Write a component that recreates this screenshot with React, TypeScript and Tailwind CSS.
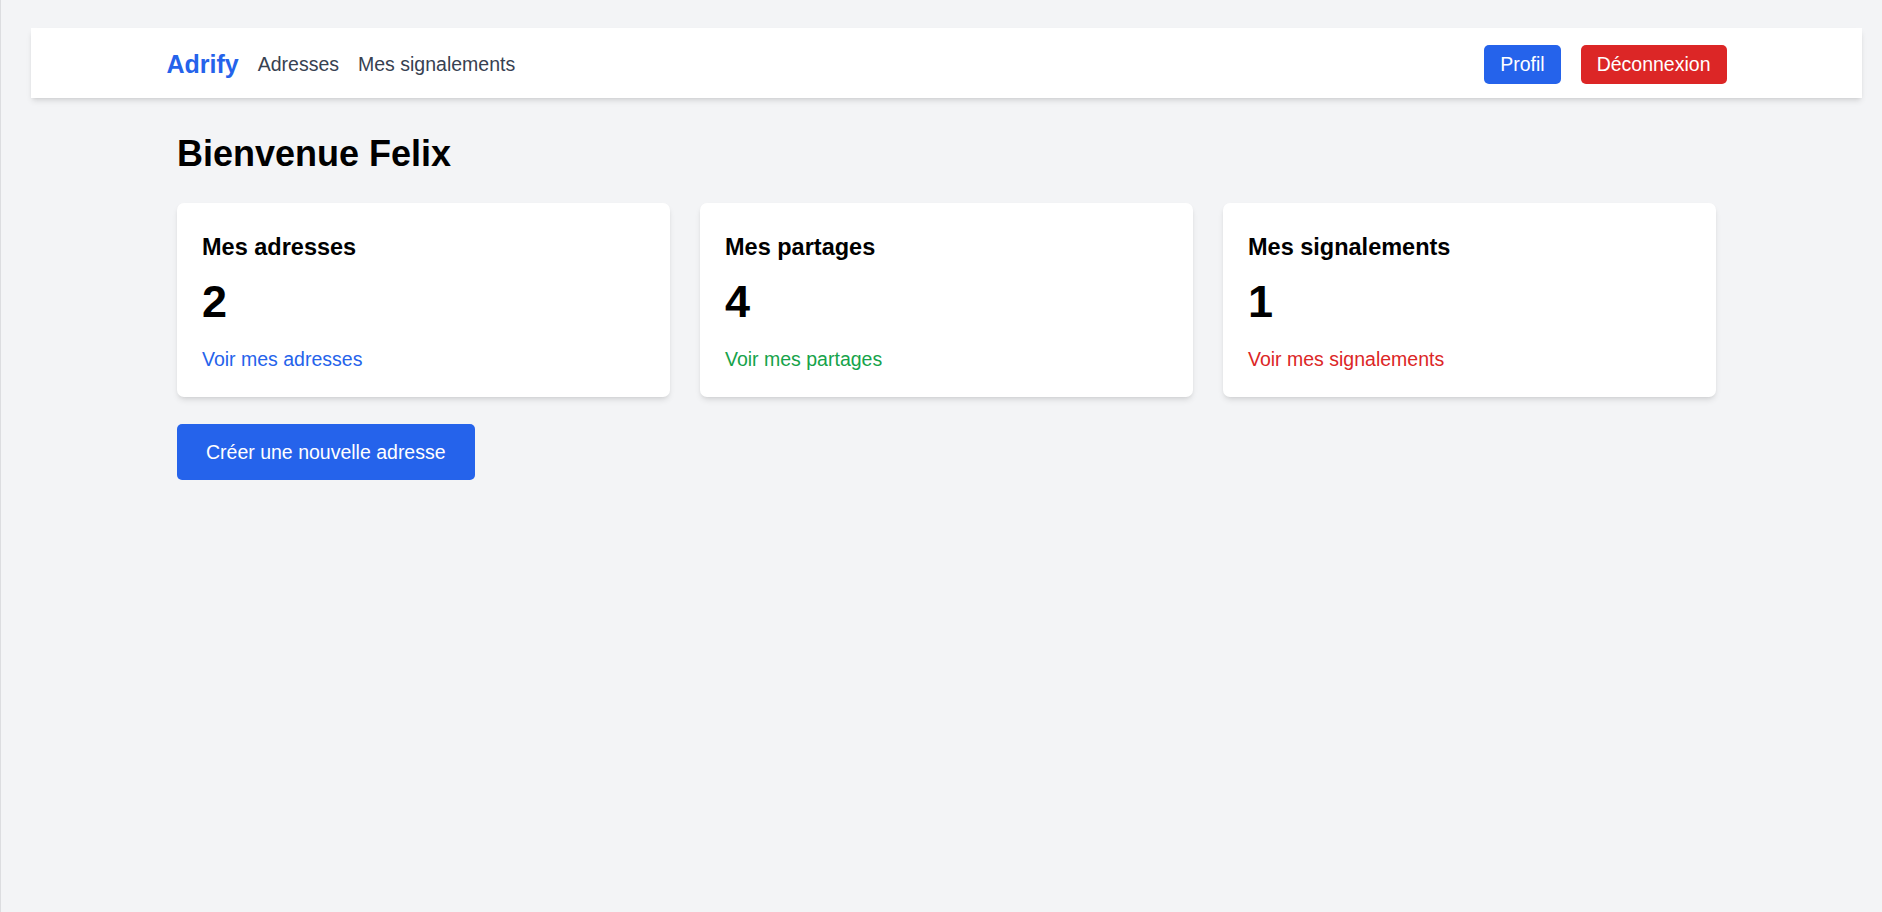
const stats = [
  { title: 'Mes adresses', count: 2, link: 'Voir mes adresses', color: 'text-[#2563eb]' },
  { title: 'Mes partages', count: 4, link: 'Voir mes partages', color: 'text-[#16a34a]' },
  { title: 'Mes signalements', count: 1, link: 'Voir mes signalements', color: 'text-[#dc2626]' },
];

export default function App() {
  return (
    <div
      className="min-h-screen bg-[#f3f4f6] border-l border-[#dcdde0] pl-[30px] pr-[20px] pt-[28px] text-black"
      style={{ fontFamily: '"Liberation Sans", Arial, sans-serif' }}
    >
      {/* Top bar */}
      <nav className="h-[70px] bg-white shadow-md flex items-center">
        <div className="w-[1560px] mx-auto pt-[2px] flex items-center justify-between">
          <div className="flex items-center gap-[19px]">
            <a href="#" className="text-[25px] font-bold text-[#2563eb] leading-[35px]">
              Adrify
            </a>
            <a href="#" className="text-[19.5px] text-[#374151] leading-[30px]">
              Adresses
            </a>
            <a href="#" className="text-[19.5px] text-[#374151] leading-[30px]">
              Mes signalements
            </a>
          </div>
          <div className="flex items-center gap-[20px]">
            <button className="h-[39px] px-[16px] rounded-[5px] bg-[#2563eb] text-white text-[19.5px] leading-[30px]">
              Profil
            </button>
            <button className="h-[39px] px-[16px] rounded-[5px] bg-[#dc2626] text-white text-[19.5px] leading-[30px]">
              Déconnexion
            </button>
          </div>
        </div>
      </nav>

      <main className="max-w-[1539px] mx-auto">
        <h1 className="mt-[33px] text-[36px] leading-[45px] font-bold">Bienvenue Felix</h1>

        <div className="mt-[27px] grid grid-cols-3 gap-[30px]">
          {stats.map((s) => (
            <div key={s.title} className="bg-white rounded-[7px] shadow-md pt-[27px] px-[25px] pb-[23px]">
              <h2 className="text-[23.5px] leading-[35px] font-semibold">{s.title}</h2>
              <p className="mt-[12px] text-[45px] leading-[50px] font-bold">{s.count}</p>
              <a href="#" className={`block mt-[17px] text-[19.5px] leading-[30px] ${s.color}`}>
                {s.link}
              </a>
            </div>
          ))}
        </div>

        <button className="mt-[27px] px-[29px] py-[13px] rounded-[5px] bg-[#2563eb] text-white text-[19.5px] leading-[30px]">
          Créer une nouvelle adresse
        </button>
      </main>
    </div>
  );
}
